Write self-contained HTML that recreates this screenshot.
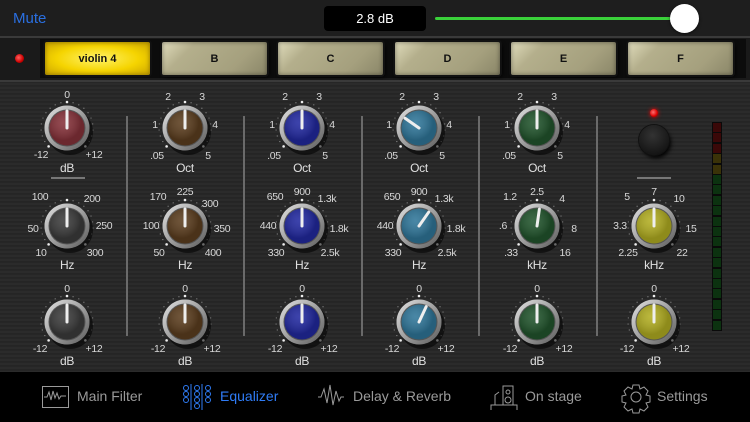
<!DOCTYPE html>
<html><head><meta charset="utf-8"><style>
*{margin:0;padding:0;box-sizing:border-box}
body{width:750px;height:422px;overflow:hidden;background:#1c1c1c;font-family:"Liberation Sans",sans-serif;position:relative}
.a{position:absolute}
.t{position:absolute;color:#d8d8d8;font-size:10.5px;transform:translate(-50%,-50%);white-space:nowrap;letter-spacing:-0.3px}
.u{font-size:12px;color:#e0e0e0}
.btn{position:absolute;top:42px;height:33px;width:105px;background:linear-gradient(135deg,#e0dcbc,#b4af8c 25%,#a5a07e 70%,#8a8668);border-radius:2px;box-shadow:0 0 0 2px #111,inset 0 0 5px rgba(0,0,0,.45),2px 2px 4px #000;font-size:11px;font-weight:bold;color:#111;display:flex;align-items:center;justify-content:center}
.sep{position:absolute;top:116px;height:220px;width:2px;background:#6a6a6a}
.tab{position:absolute;top:388px;font-size:14px;color:#9a9a9a}
</style></head><body>
<div class="a" style="left:0;top:0;width:750px;height:36px;background:#1e1e1e"></div>
<div class="a" style="left:13px;top:10px;font-size:15px;color:#2a6fe0">Mute</div>
<div class="a" style="left:324px;top:6px;width:102px;height:25px;background:#000;border-radius:4px;color:#fff;font-size:13px;text-align:center;line-height:25px">2.8 dB</div>
<div class="a" style="left:435px;top:17px;width:250px;height:3px;background:#3ad13a;border-radius:2px"></div>
<div class="a" style="left:670px;top:4px;width:29px;height:29px;background:#fff;border-radius:50%;box-shadow:0 1px 3px rgba(0,0,0,.6)"></div>
<div class="a" style="left:0;top:36px;width:750px;height:2px;background:#3a3a3a"></div>
<div class="a" style="left:0;top:38px;width:750px;height:42px;background:#1a1a1a"></div>
<div class="a" style="left:15px;top:54px;width:9px;height:9px;border-radius:50%;background:radial-gradient(circle at 40% 40%,#ff6060,#c00 60%,#500)"></div>
<div class="a" style="left:40px;top:39px;width:706px;height:39px;background:#0c0c0c"></div>
<div class="btn" style="left:45px;background:radial-gradient(ellipse at center,#fff36a,#f5d400 55%,#c8a200);box-shadow:0 0 0 2px #111,inset 0 0 5px #8a7000">violin 4</div>
<div class="btn" style="left:162px">B</div>
<div class="btn" style="left:278px">C</div>
<div class="btn" style="left:395px">D</div>
<div class="btn" style="left:511px">E</div>
<div class="btn" style="left:628px">F</div>
<div class="a" style="left:0;top:80px;width:750px;height:2px;background:#3a3a3a"></div>
<div class="a" style="left:0;top:82px;width:750px;height:290px;background:repeating-linear-gradient(180deg,#262626 0 1px,#2b2b2b 1px 3px,#252525 3px 4px)"></div>
<div id="k"></div>
<div class="a" style="left:712px;top:122px;width:10px;height:209px;background:#0a0a0a" id="m"></div>
<div class="a" style="left:0;top:372px;width:750px;height:50px;background:#000"></div>
<svg class="a" style="left:0;top:372px" width="750" height="50" fill="none" stroke="#9a9a9a" stroke-width="1">
<rect x="42.5" y="14.5" width="26" height="21"/><path d="M44 25h3l2-5 2 8 2-9 2 7 2-5 2 6 2-3h5"/>
<g stroke="#2f7cf6"><circle cx="186" cy="16" r="2.5"/><circle cx="186" cy="22" r="2.5"/><circle cx="186" cy="28" r="2.5"/><circle cx="197" cy="16" r="2.5"/><circle cx="197" cy="22" r="2.5"/><circle cx="197" cy="28" r="2.5"/><circle cx="197" cy="34" r="2.5"/><circle cx="208" cy="16" r="2.5"/><circle cx="208" cy="22" r="2.5"/><circle cx="208" cy="28" r="2.5"/><path d="M191 12v26M202 12v26"/></g>
<path d="M318 25h3l3-8 3 14 3-18 3 20 3-14 3 10 2-4h3"/>
<path d="M491 38v-5h26v5M495 33v-10l4-3M503 14h10v19h-10z"/><circle cx="508" cy="20" r="2"/><circle cx="508" cy="28" r="3"/>
<circle cx="636" cy="25" r="5"/><path d="M633 13h6l1 4 4-2 4 4-2 4 4 1v6l-4 1 2 4-4 4-4-2-1 4h-6l-1-4-4 2-4-4 2-4-4-1v-6l4-1-2-4 4-4 4 2z"/>
</svg>
<div class="tab" style="left:77px">Main Filter</div>
<div class="tab" style="left:220px;color:#2f7cf6">Equalizer</div>
<div class="tab" style="left:353px">Delay &amp; Reverb</div>
<div class="tab" style="left:525px">On stage</div>
<div class="tab" style="left:657px">Settings</div>
<script>
var H='';
function T(x,y,s,c){H+='<div class="t '+(c||'')+'" style="left:'+x+'px;top:'+y+'px">'+s+'</div>';}
function K(cx,cy,col,ang){
 var s='<svg class="a" style="left:'+(cx-32)+'px;top:'+(cy-32)+'px" width="64" height="64">';
 for(var i=0;i<=20;i++){var a=(-135+i*13.5)*Math.PI/180;var r=26;var big=(i==0||i==10||i==20);s+='<circle cx="'+(32+r*Math.sin(a))+'" cy="'+(32-r*Math.cos(a))+'" r="'+(big?1.3:0.6)+'" fill="'+(big?'#eee':'#888')+'"/>';}
 s+='<circle cx="35" cy="36" r="23" fill="rgba(0,0,0,.55)"/>';
 s+='<circle cx="32" cy="32" r="22.5" fill="#c4c4c4"/><circle cx="32" cy="32" r="22.5" fill="url(#g)"/>';
 s+='<circle cx="32" cy="32" r="18.5" fill="#555"/><circle cx="32" cy="32" r="17.5" fill="'+col+'"/><circle cx="32" cy="32" r="17.5" fill="url(#h)"/>';
 s+='<line x1="32" y1="32" x2="32" y2="15" stroke="#eee" stroke-width="3" stroke-linecap="round" transform="rotate('+ang+' 32 32)"/></svg>';
 H+=s;}
H+='<svg width="0" height="0" class="a"><defs><linearGradient id="g" x1="0" y1="0" x2="1" y2="1"><stop offset="0" stop-color="#fff" stop-opacity=".5"/><stop offset="1" stop-color="#000" stop-opacity=".55"/></linearGradient><radialGradient id="h" cx=".4" cy=".35"><stop offset="0" stop-color="#fff" stop-opacity=".12"/><stop offset="1" stop-color="#000" stop-opacity=".2"/></radialGradient></defs></svg>';
var X=[67,185,302,419,537,654];
var C=['#86323a','#5c3e1f','#2229a0','#30779a','#22552d','#b2ae22'];
var A1=[0,0,0,-55,0],A2=[0,0,0,35,8,0],A3=[0,0,0,25,0,0];
K(67,128,C[0],0);T(67,95,'0');T(41,155,'-12');T(94,155,'+12');T(67,168,'dB','u');
H+='<div class="a" style="left:51px;top:177px;width:34px;height:2px;background:#777"></div>';
for(var i=1;i<5;i++){var x=X[i];K(x,128,C[i],A1[i]);T(x-17,97,'2');T(x+17,97,'3');T(x-30,125,'1');T(x+30,125,'4');T(x-28,156,'.05');T(x+23,156,'5');T(x,168,'Oct','u');}
H+='<div class="a" style="left:650px;top:109px;width:8px;height:8px;border-radius:50%;background:radial-gradient(circle at 40% 40%,#ff7070,#d00 60%,#600);box-shadow:0 0 4px #f00"></div>';
H+='<div class="a" style="left:639px;top:125px;width:30px;height:30px;border-radius:50%;background:radial-gradient(circle at 45% 35%,#333,#0a0a0a);box-shadow:0 0 0 1px #111,2px 3px 4px #000"></div>';
H+='<div class="a" style="left:637px;top:177px;width:34px;height:2px;background:#777"></div>';
var L=[['100','200','50','250','10','300','Hz'],['170','300','100','350','50','400','Hz'],['650','1.3k','440','1.8k','330','2.5k','Hz'],['650','1.3k','440','1.8k','330','2.5k','Hz'],['1.2','4','.6','8','.33','16','kHz'],['5','10','3.3','15','2.25','22','kHz']];
var top2=[null,'225','900','900','2.5','7'];
K(67,226,'#3c3c3c',0);
for(var i=0;i<6;i++){var x=X[i],l=L[i];if(i>0)K(x,226,C[i],A2[i]);
 T(x-27,197,l[0]);T(x+25,i==1?204:199,l[1]);T(x-34,i==0?229:226,l[2]);T(x+37,i==0?226:229,l[3]);T(x-26,253,l[4]);T(x+28,253,l[5]);T(x,265,l[6],'u');if(top2[i])T(x,192,top2[i]);}
for(var i=0;i<6;i++){var x=X[i];K(x,322,i==0?'#3c3c3c':C[i],A3[i]);T(x,289,'0');T(x-27,349,'-12');T(x+27,349,'+12');T(x,361,'dB','u');}
[126,243,361,478,596].forEach(function(x){H+='<div class="sep" style="left:'+x+'px"></div>';});
document.getElementById('k').innerHTML=H;
var m='';for(var j=0;j<20;j++){var c=j<3?'#3a0808':(j<5?'#3a3208':'#0c3210');m+='<div class="a" style="left:1px;top:'+(1+j*10.4)+'px;width:8px;height:9px;background:'+c+'"></div>';}
document.getElementById('m').innerHTML=m;
</script>
</body></html>
